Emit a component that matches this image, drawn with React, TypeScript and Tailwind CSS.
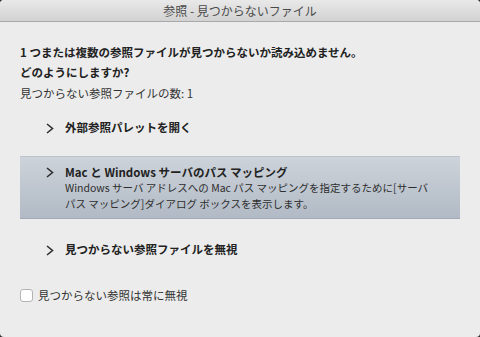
import React from "react";

const font = { fontFamily: '"Noto Sans CJK JP", "Noto Sans", sans-serif' };

function Chevron() {
  return (
    <svg width="8" height="11" viewBox="0 0 8 11" className="shrink-0">
      <polyline points="1,1 6.5,5.5 1,10" fill="none" stroke="#2e2e2e" strokeWidth="1.6" strokeLinejoin="miter" />
    </svg>
  );
}

export default function App() {
  return (
    <div className="w-[480px] h-[337px] bg-[#2a2a2a]" style={font}>
      <div className="w-full h-full bg-[#ececec] rounded-t-[4px] rounded-b-[4px] overflow-hidden flex flex-col">
        <div className="h-[22px] shrink-0 bg-gradient-to-b from-[#e9e9e9] to-[#d2d2d2] border-b border-[#a9a9a9] flex items-center justify-center text-[12px] text-[#4a4a4a] leading-none">
          参照 - 見つからないファイル
        </div>
        <div className="px-[20px] pt-[20px] flex flex-col">
          <div className="text-[11.5px] font-bold text-[#222] leading-[20px]">
            <div>1 つまたは複数の参照ファイルが見つからないか読み込めません。</div>
            <div>どのようにしますか?</div>
          </div>
          <div className="mt-[2px] text-[11.5px] text-[#333] leading-[18px]">見つからない参照ファイルの数: 1</div>
        </div>
        <div className="mt-[8px] flex flex-col">
          <div className="mx-[20px] h-[36px] pl-[26px] flex items-center gap-[11px]">
            <Chevron />
            <span className="text-[11.5px] font-bold text-[#222]">外部参照パレットを開く</span>
          </div>
          <div className="mx-[20px] mt-[10px] h-[63px] pl-[26px] pr-[12px] pt-[8px] flex items-start gap-[11px] bg-gradient-to-b from-[#cdd3da] to-[#b1bac5] border-t border-[#bcc3cb] border-b border-b-[#a2abb6]">
            <div className="pt-[2px]"><Chevron /></div>
            <div className="flex flex-col">
              <span className="text-[11.5px] font-bold text-[#222] leading-[15px]">Mac と Windows サーバのパス マッピング</span>
              <span className="text-[10.5px] text-[#2e2e2e] leading-[16px]">Windows サーバ アドレスへの Mac パス マッピングを指定するために[サーバ<br />パス マッピング]ダイアログ ボックスを表示します。</span>
            </div>
          </div>
          <div className="mx-[20px] mt-[13px] h-[36px] pl-[26px] flex items-center gap-[11px]">
            <Chevron />
            <span className="text-[11.5px] font-bold text-[#222]">見つからない参照ファイルを無視</span>
          </div>
        </div>
        <div className="mt-[19px] px-[20px] flex items-center gap-[5px]">
          <div className="w-[13px] h-[13px] rounded-[3px] bg-white border border-[#b4b4b4] shrink-0" />
          <span className="text-[11.5px] text-[#333]">見つからない参照は常に無視</span>
        </div>
      </div>
    </div>
  );
}
